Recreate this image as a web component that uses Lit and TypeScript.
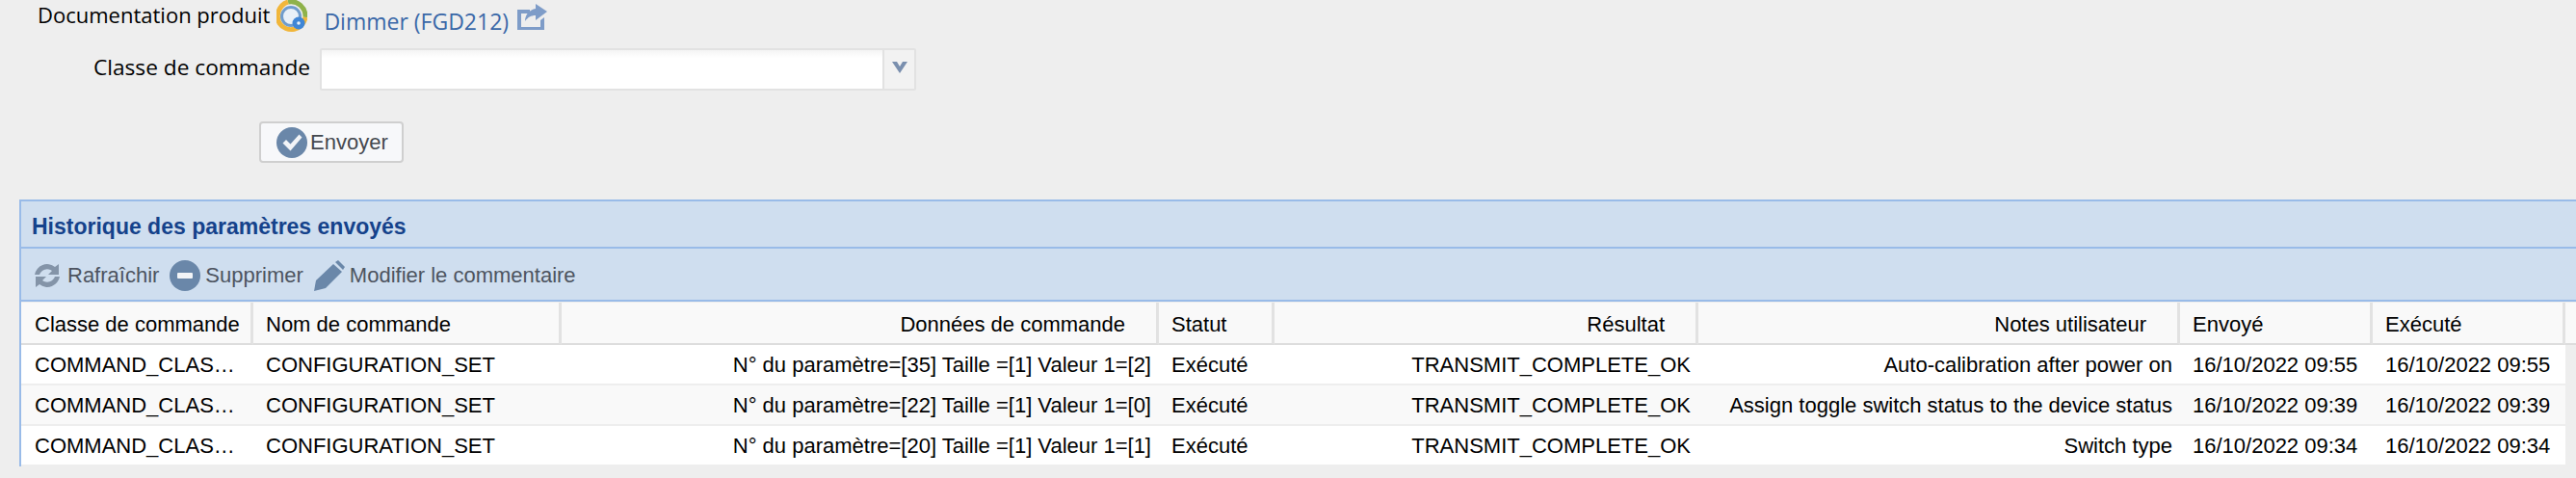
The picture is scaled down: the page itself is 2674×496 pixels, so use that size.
import { LitElement, html, css, svg } from "lit";
import { customElement } from "lit/decorators.js";

const COLS = [
  { t: "Classe de commande", k: "l", hr: false },
  { t: "Nom de commande", k: "l", hr: false },
  { t: "Données de commande", k: "r", hr: true },
  { t: "Statut", k: "l", hr: false },
  { t: "Résultat", k: "r", hr: true },
  { t: "Notes utilisateur", k: "r", hr: true },
  { t: "Envoyé", k: "l", hr: false },
  { t: "Exécuté", k: "l", hr: false },
];

const ROWS = [
  ["COMMAND_CLAS…", "CONFIGURATION_SET", "N° du paramètre=[35] Taille =[1] Valeur 1=[2]", "Exécuté", "TRANSMIT_COMPLETE_OK", "Auto-calibration after power on", "16/10/2022 09:55", "16/10/2022 09:55"],
  ["COMMAND_CLAS…", "CONFIGURATION_SET", "N° du paramètre=[22] Taille =[1] Valeur 1=[0]", "Exécuté", "TRANSMIT_COMPLETE_OK", "Assign toggle switch status to the device status", "16/10/2022 09:39", "16/10/2022 09:39"],
  ["COMMAND_CLAS…", "CONFIGURATION_SET", "N° du paramètre=[20] Taille =[1] Valeur 1=[1]", "Exécuté", "TRANSMIT_COMPLETE_OK", "Switch type", "16/10/2022 09:34", "16/10/2022 09:34"],
];

const logo = svg`<svg class="logo" viewBox="0 0 32 36" width="32" height="36">
  <path d="M12 3 A15 15.5 0 0 1 30 19" fill="none" stroke="#8fb24a" stroke-width="5"/>
  <path d="M30 19 A15 15.5 0 0 1 3 25 A15 15.5 0 0 1 12 3" fill="none" stroke="#f1b63a" stroke-width="5"/>
  <circle cx="15" cy="18" r="9.5" fill="#e8f0f8" stroke="#6f9ccc" stroke-width="3"/>
  <circle cx="23" cy="25" r="6.5" fill="#3f86d6"/>
  <circle cx="23" cy="25" r="1.8" fill="#e8f0f8"/>
</svg>`;

const share = svg`<svg class="share" viewBox="0 0 32 28" width="32" height="28">
  <path d="M1 6h13v4H5v14h20v-7l4-3v13H1z" fill="#7e9cc8"/>
  <path d="M20 0l12 8-12 9v-5c-5 0-8 2-11 6 0-7 5-12 11-13z" fill="#7e9cc8"/>
</svg>`;

const check = svg`<svg viewBox="0 0 32 32" width="32" height="32">
  <circle cx="16" cy="16" r="16" fill="#6a87a9"/>
  <path d="M6.5 16.5l3.5-3.5 4.5 4.5 9-10 3 3-12 14z" fill="#f2f4f7"/>
</svg>`;

const refresh = svg`<svg viewBox="0 0 32 32" width="32" height="32">
  <path d="M3 15A13 13 0 0 1 24 7l4-3v11H17l4-4A8.500 8.500 0 0 0 8 15z" fill="#8494a8"/>
  <path d="M29 17A13 13 0 0 1 8 25l-4 3V17h11l-4 4A8.500 8.500 0 0 0 24 17z" fill="#8494a8"/>
</svg>`;

const minus = svg`<svg viewBox="0 0 32 32" width="32" height="32">
  <circle cx="16" cy="16" r="16" fill="#6a87a9"/>
  <rect x="8" y="13" width="16" height="6" rx="1" fill="#f2f4f7"/>
</svg>`;

const pencil = svg`<svg viewBox="0 0 32 32" width="32" height="32">
  <path d="M0 32l2-11L20 4l9 8-17 17z" fill="#6a87a9"/>
  <path d="M22 2l3-2 7 7-2 3z" fill="#6a87a9"/>
</svg>`;

@customElement("app-root")
export class AppRoot extends LitElement {
  static styles = css`
    :host {
      display: block;
      width: 100%;
      height: 496px;
      overflow: hidden;
      background: #eeeeee;
      font-family: "Liberation Sans", Arial, sans-serif;
      font-size: 22px;
      color: #000;
    }
    .doc {
      display: flex;
      align-items: flex-start;
      height: 50px;
      padding-left: 39px;
      font-family: "Open Sans", sans-serif;
      font-size: 22px;
    }
    .doc-label {
      line-height: 30px;
    }
    .logo {
      margin: -1px 0 0 7px;
      flex: none;
    }
    .link {
      margin: 7px 0 0 17px;
      line-height: 30px;
      font-size: 23px;
      color: #3a68a8;
    }
    .share {
      margin: 4px 0 0 8px;
      flex: none;
    }
    .form-row {
      display: flex;
      align-items: center;
      height: 44px;
      font-family: "Open Sans", sans-serif;
      font-size: 22.7px;
    }
    .form-label {
      width: 332px;
      text-align: right;
      padding: 0 10px 6px 0;
      box-sizing: border-box;
    }
    .combo {
      display: flex;
      width: 619px;
      height: 44px;
      box-sizing: border-box;
      border: 2px solid #e2e2e2;
      border-radius: 2px;
    }
    .combo-input {
      flex: 1;
      background: linear-gradient(#f4f4f4, #ffffff 8px);
    }
    .combo-btn {
      width: 33px;
      display: flex;
      align-items: center;
      justify-content: center;
      box-sizing: border-box;
      padding-bottom: 4px;
      background: #f2f2f2;
      border-left: 2px solid #e2e2e2;
    }
    .btn-wrap {
      padding: 32px 0 38px 269px;
    }
    .btn {
      display: flex;
      align-items: center;
      gap: 3px;
      box-sizing: border-box;
      width: 150px;
      height: 43px;
      padding-left: 16px;
      background: #f7f8fa;
      border: 2px solid #cfcfcf;
      border-radius: 4px;
      color: #44484f;
    }
    .panel {
      margin-left: 20px;
      border-left: 2px solid #99bbe8;
    }
    .title {
      box-sizing: border-box;
      height: 51px;
      padding: 5px 0 0 11px;
      display: flex;
      align-items: center;
      background: #cfdeef;
      border-top: 2px solid #99bbe8;
      border-bottom: 2px solid #99bbe8;
      color: #15428b;
      font-weight: bold;
      font-size: 23px;
    }
    .toolbar {
      box-sizing: border-box;
      height: 55px;
      display: flex;
      align-items: center;
      padding: 3px 0 0 11px;
      background: #cfdeef;
      border-bottom: 2px solid #99bbe8;
      color: #4d5460;
    }
    .tool {
      display: flex;
      align-items: center;
      gap: 5px;
      margin-right: 11px;
    }
    .grid {
      display: grid;
      grid-template-columns: 241px 320px 620px 120px 440px 500px 200px 200px 1fr;
    }
    .th {
      box-sizing: border-box;
      height: 44px;
      margin-top: 1px;
      line-height: 45px;
      padding: 0 13px;
      background: #f9f9f9;
      border-right: 3px solid #e2e2e2;
      border-bottom: 2px solid #dddddd;
      white-space: nowrap;
    }
    .th.first, .td.first {
      padding-left: 14px;
    }
    .th.r {
      text-align: right;
      padding-right: 32px;
    }
    .th.last {
      border-right: 0;
      padding: 0;
    }
    .td {
      box-sizing: border-box;
      height: 40px;
      margin-bottom: 2px;
      line-height: 41px;
      padding: 0 8px 0 13px;
      background: #ffffff;
      white-space: nowrap;
    }
    .td.alt {
      background: #f9f9f9;
    }
    .td.r {
      text-align: right;
    }
    .td.end {
      background: transparent;
      padding: 0;
    }
  `;

  render() {
    return html`
      <div class="doc">
        <span class="doc-label">Documentation produit</span>
        ${logo}
        <span class="link">Dimmer (FGD212)</span>
        ${share}
      </div>
      <div class="form-row">
        <div class="form-label">Classe de commande</div>
        <div class="combo">
          <div class="combo-input"></div>
          <div class="combo-btn">
            <svg viewBox="0 0 16 12" width="16" height="12"><path d="M0 0h5l3 5 3-5h5L8 12z" fill="#7a8fae"/></svg>
          </div>
        </div>
      </div>
      <div class="btn-wrap">
        <div class="btn">${check}<span>Envoyer</span></div>
      </div>
      <div class="panel">
        <div class="title">Historique des paramètres envoyés</div>
        <div class="toolbar">
          <div class="tool">${refresh}<span>Rafraîchir</span></div>
          <div class="tool">${minus}<span>Supprimer</span></div>
          <div class="tool">${pencil}<span>Modifier le commentaire</span></div>
        </div>
        <div class="grid">
          ${COLS.map(
            (c, i) => html`<div class="th ${c.hr ? "r" : ""} ${i === 0 ? "first" : ""}">${c.t}</div>`
          )}
          <div class="th last"></div>
          ${ROWS.map(
            (row, ri) => html`
              ${row.map(
                (v, i) =>
                  html`<div class="td ${ri === 1 ? "alt" : ""} ${COLS[i].hr ? "r" : ""} ${i === 0 ? "first" : ""}">${v}</div>`
              )}
              <div class="td end"></div>
            `
          )}
        </div>
      </div>
    `;
  }
}
